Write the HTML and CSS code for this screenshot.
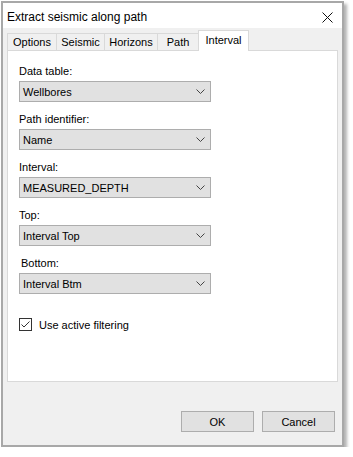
FILE: index.html
```html
<!DOCTYPE html>
<html lang="en">
<head>
  <meta charset="UTF-8" />
  <title>Extract seismic along path</title>
  <link rel="stylesheet" href="styles.css">
</head>
<body>

<div class="window">
  <div class="titlebar">
    <span class="title">Extract seismic along path</span>
    <svg class="close" width="11" height="11" viewBox="0 0 11 11">
      <path d="M0.5 0.5 L10.5 10.5 M10.5 0.5 L0.5 10.5" stroke="#111" stroke-width="1" fill="none" />
    </svg>
  </div>

  <div class="dialog-body">
    <!-- Tab strip -->
    <div class="tabs">
      <div class="tab tab-options">Options</div>
      <div class="tab tab-seismic">Seismic</div>
      <div class="tab tab-horizons">Horizons</div>
      <div class="tab tab-path">Path</div>
      <div class="tab tab-interval active">Interval</div>
    </div>

    <div class="panel">
      <div class="field">
        <div class="label">Data table:</div>
        <div class="combo">
          <span>Wellbores</span>
          <svg class="chevron" width="9" height="5" viewBox="0 0 9 5"><polyline points="0.5,0.5 4.5,4.5 8.5,0.5" /></svg>
        </div>
      </div>

      <div class="field">
        <div class="label">Path identifier:</div>
        <div class="combo">
          <span>Name</span>
          <svg class="chevron" width="9" height="5" viewBox="0 0 9 5"><polyline points="0.5,0.5 4.5,4.5 8.5,0.5" /></svg>
        </div>
      </div>

      <div class="field">
        <div class="label">Interval:</div>
        <div class="combo">
          <span>MEASURED_DEPTH</span>
          <svg class="chevron" width="9" height="5" viewBox="0 0 9 5"><polyline points="0.5,0.5 4.5,4.5 8.5,0.5" /></svg>
        </div>
      </div>

      <div class="field">
        <div class="label">Top:</div>
        <div class="combo">
          <span>Interval Top</span>
          <svg class="chevron" width="9" height="5" viewBox="0 0 9 5"><polyline points="0.5,0.5 4.5,4.5 8.5,0.5" /></svg>
        </div>
      </div>

      <div class="field">
        <div class="label label-indent">Bottom:</div>
        <div class="combo">
          <span>Interval Btm</span>
          <svg class="chevron" width="9" height="5" viewBox="0 0 9 5"><polyline points="0.5,0.5 4.5,4.5 8.5,0.5" /></svg>
        </div>
      </div>

      <label class="check">
        <svg class="box" width="13" height="13" viewBox="0 0 13 13">
          <rect x="0.5" y="0.5" width="12" height="12" fill="#fff" stroke="#333" />
          <polyline points="2.5,6.5 5,9 10.5,3.5" fill="none" stroke="#333" stroke-width="1" />
        </svg>
        Use active filtering
      </label>
    </div>

    <div class="buttons">
      <button class="btn">OK</button>
      <button class="btn">Cancel</button>
    </div>
  </div>
</div>

</body>
</html>
```

FILE: styles.css
```css
body {
  margin: 0;
  padding: 0;
  background: #fff;
  font-family: 'Liberation Sans', Arial, sans-serif;
  font-size: 11px;
  color: #000;
}
.window {
  margin: 1px 0 0 1px;
  width: 339px;
  height: 442px;
  border: 2px solid #a8a8a8;
  box-shadow: 3px 3px 3px rgba(0, 0, 0, 0.3);
  background: #f0f0f0;
  display: flex;
  flex-direction: column;
}
.titlebar {
  height: 25px;
  box-sizing: border-box;
  padding: 2px 9px 0 4px;
  background: #fff;
  display: flex;
  align-items: center;
  justify-content: space-between;
  font-size: 12px;
}
.close {
  margin-top: 1px;
}
.dialog-body {
  padding: 2px 4px 0;
}
.tabs {
  display: flex;
  align-items: flex-end;
  height: 21px;
  margin-bottom: -1px;
  position: relative;
  z-index: 1;
}
.tab {
  box-sizing: border-box;
  height: 17px;
  margin-bottom: 1px;
  margin-left: -1px;
  border: 1px solid #d9d9d9;
  border-bottom: none;
  background: #f0f0f0;
  display: flex;
  align-items: center;
  justify-content: center;
}
.tab-options { width: 50px; margin-left: 0; }
.tab-seismic { width: 49px; }
.tab-horizons { width: 54px; }
.tab-path { width: 42px; }
.tab-interval { width: 51px; }
.tab.active {
  height: 21px;
  margin-bottom: 0;
  padding-bottom: 2px;
  background: #fff;
}
.panel {
  box-sizing: border-box;
  height: 332px;
  padding: 14px 0 0 11px;
  background: #fff;
  border: 1px solid #d9d9d9;
}
.field + .field {
  margin-top: 11px;
}
.label {
  height: 13px;
  line-height: 13px;
  margin-bottom: 3px;
}
.label-indent {
  padding-left: 2px;
}
.combo {
  box-sizing: border-box;
  width: 192px;
  height: 21px;
  padding: 0 5px 0 3px;
  background: #e1e1e1;
  border: 1px solid #adadad;
  display: flex;
  align-items: center;
  justify-content: space-between;
}
.chevron polyline {
  fill: none;
  stroke: #444;
  stroke-width: 1;
}
.check {
  margin-top: 24px;
  display: flex;
  align-items: center;
}
.check .box {
  margin-right: 7px;
}
.buttons {
  display: flex;
  justify-content: flex-end;
  gap: 8px;
  margin-top: 29px;
  padding-right: 3px;
}
.btn {
  box-sizing: border-box;
  width: 73px;
  height: 21px;
  padding: 0;
  background: #e1e1e1;
  border: 1px solid #adadad;
  font-family: inherit;
  font-size: 11px;
  color: #000;
}
```
